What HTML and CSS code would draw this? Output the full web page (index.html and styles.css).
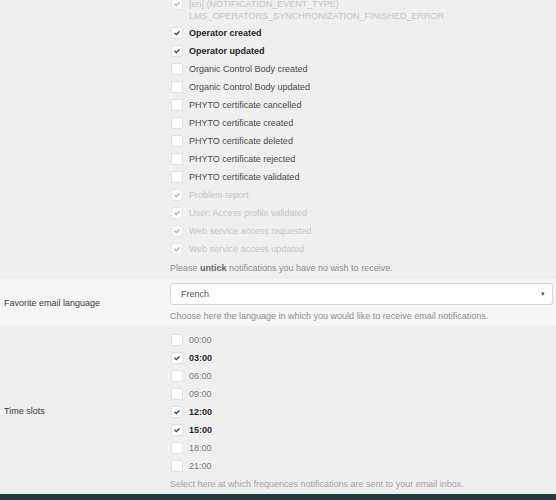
FILE: index.html
```html
<!DOCTYPE html>
<html lang="en">
<head>
    <meta charset="UTF-8">
    <meta name="viewport" content="width=device-width, initial-scale=1.0">
    <title>Notification settings</title>
    <link rel="stylesheet" href="styles.css">
</head>
<body>
    <div class="settings">

        <!-- notifications -->
        <div class="row odd first">
            <div class="label"></div>
            <div class="field">
                <div class="item disabled">
                    <span class="box checked"><svg viewBox="0 0 12 12"><path d="M3.4 6.3 L5.2 7.9 L8.6 4.5"/></svg></span>
                    <span class="text">[en] (NOTIFICATION_EVENT_TYPE)<br>LMS_OPERATORS_SYNCHRONIZATION_FINISHED_ERROR</span>
                </div>
                <div class="item on">
                    <span class="box checked"><svg viewBox="0 0 12 12"><path d="M3.4 6.3 L5.2 7.9 L8.6 4.5"/></svg></span>
                    <span class="text">Operator created</span>
                </div>
                <div class="item on">
                    <span class="box checked"><svg viewBox="0 0 12 12"><path d="M3.4 6.3 L5.2 7.9 L8.6 4.5"/></svg></span>
                    <span class="text">Operator updated</span>
                </div>
                <div class="item">
                    <span class="box"></span>
                    <span class="text">Organic Control Body created</span>
                </div>
                <div class="item">
                    <span class="box"></span>
                    <span class="text">Organic Control Body updated</span>
                </div>
                <div class="item">
                    <span class="box"></span>
                    <span class="text">PHYTO certificate cancelled</span>
                </div>
                <div class="item">
                    <span class="box"></span>
                    <span class="text">PHYTO certificate created</span>
                </div>
                <div class="item">
                    <span class="box"></span>
                    <span class="text">PHYTO certificate deleted</span>
                </div>
                <div class="item">
                    <span class="box"></span>
                    <span class="text">PHYTO certificate rejected</span>
                </div>
                <div class="item">
                    <span class="box"></span>
                    <span class="text">PHYTO certificate validated</span>
                </div>
                <div class="item disabled">
                    <span class="box checked"><svg viewBox="0 0 12 12"><path d="M3.4 6.3 L5.2 7.9 L8.6 4.5"/></svg></span>
                    <span class="text">Problem report</span>
                </div>
                <div class="item disabled">
                    <span class="box checked"><svg viewBox="0 0 12 12"><path d="M3.4 6.3 L5.2 7.9 L8.6 4.5"/></svg></span>
                    <span class="text">User: Access profile validated</span>
                </div>
                <div class="item disabled">
                    <span class="box checked"><svg viewBox="0 0 12 12"><path d="M3.4 6.3 L5.2 7.9 L8.6 4.5"/></svg></span>
                    <span class="text">Web service access requested</span>
                </div>
                <div class="item disabled">
                    <span class="box checked"><svg viewBox="0 0 12 12"><path d="M3.4 6.3 L5.2 7.9 L8.6 4.5"/></svg></span>
                    <span class="text">Web service access updated</span>
                </div>
                <p class="help">Please <b>untick</b> notifications you have no wish to receive.</p>
            </div>
        </div>

        <!-- language -->
        <div class="row even">
            <div class="label">Favorite email language</div>
            <div class="field">
                <div class="select">
                    <span>French</span>
                    <span class="arrow">&#9662;</span>
                </div>
                <p class="help">Choose here the language in which you would like to receive email notifications.</p>
            </div>
        </div>

        <!-- time slots -->
        <div class="row odd">
            <div class="label">Time slots</div>
            <div class="field">
                <div class="item time"><span class="box"></span><span class="text">00:00</span></div>
                <div class="item time on"><span class="box checked"><svg viewBox="0 0 12 12"><path d="M3.4 6.3 L5.2 7.9 L8.6 4.5"/></svg></span><span class="text">03:00</span></div>
                <div class="item time"><span class="box"></span><span class="text">06:00</span></div>
                <div class="item time"><span class="box"></span><span class="text">09:00</span></div>
                <div class="item time on"><span class="box checked"><svg viewBox="0 0 12 12"><path d="M3.4 6.3 L5.2 7.9 L8.6 4.5"/></svg></span><span class="text">12:00</span></div>
                <div class="item time on"><span class="box checked"><svg viewBox="0 0 12 12"><path d="M3.4 6.3 L5.2 7.9 L8.6 4.5"/></svg></span><span class="text">15:00</span></div>
                <div class="item time"><span class="box"></span><span class="text">18:00</span></div>
                <div class="item time"><span class="box"></span><span class="text">21:00</span></div>
                <p class="help help-time">Select here at which frequences notifications are sent to your email inbox.</p>
            </div>
        </div>
    </div>

    <div class="footer"></div>
</body>
</html>
```

FILE: styles.css
```css
body{
    margin: 0;
    font-family: "Liberation Sans", Arial, sans-serif;
    font-size: 9px;
    color: #333;
    background-color: #efefef;
}
.row{
    display: grid;
    grid-template-columns: 170px 1fr;
    align-items: center;
    padding-right: 3px;
}
.odd{
    background-color: #efefef;
    padding-top: 5px;
    padding-bottom: 4px;
}
.even{
    background-color: #f6f6f6;
    padding-top: 4px;
    padding-bottom: 4px;
}
.first{
    margin-top: -10px;
    padding-bottom: 5px;
}
.label{
    padding-left: 4px;
    color: #3a3a3a;
}

/* checkboxes */
.item{
    display: flex;
    align-items: flex-start;
    padding: 3px 0;
    line-height: 12px;
    color: #4a4a4a;
}
.first .item:first-child{
    padding-bottom: 2px;
}
.box{
    flex: none;
    width: 10px;
    height: 10px;
    margin-left: 1px;
    margin-right: 6px;
    border: 1px solid #e0e0e0;
    border-radius: 2px;
    background-color: #fff;
}
.box svg{
    display: block;
    width: 10px;
    height: 10px;
}
.box path{
    fill: none;
    stroke: #444;
    stroke-width: 1.6;
    stroke-linecap: round;
}
.on .text{
    font-weight: bold;
    color: #262626;
}
.disabled{
    color: #c4c4c4;
}
.disabled .box{
    border-color: #e6e6e6;
    background-color: #f9f9f9;
}
.disabled .box path{
    stroke: #b5b5b5;
}
.time{
    color: #7a7a7a;
}

.help{
    margin: 4px 0 0 0;
    line-height: 12px;
    color: #8c8c8c;
}
.help b{
    color: #666;
}
.help-time{
    margin-top: 3px;
    color: #a2a2a2;
}

/* select */
.select{
    display: flex;
    justify-content: space-between;
    align-items: center;
    height: 20px;
    padding: 0 7px 0 10px;
    border: 1px solid #d6d6d6;
    border-radius: 3px;
    background-color: #fff;
    color: #555;
}
.arrow{
    font-size: 7px;
    color: #555;
}
.select + .help{
    margin-top: 5px;
}

.footer{
    height: 6px;
    background-color: #27373e;
}
```
